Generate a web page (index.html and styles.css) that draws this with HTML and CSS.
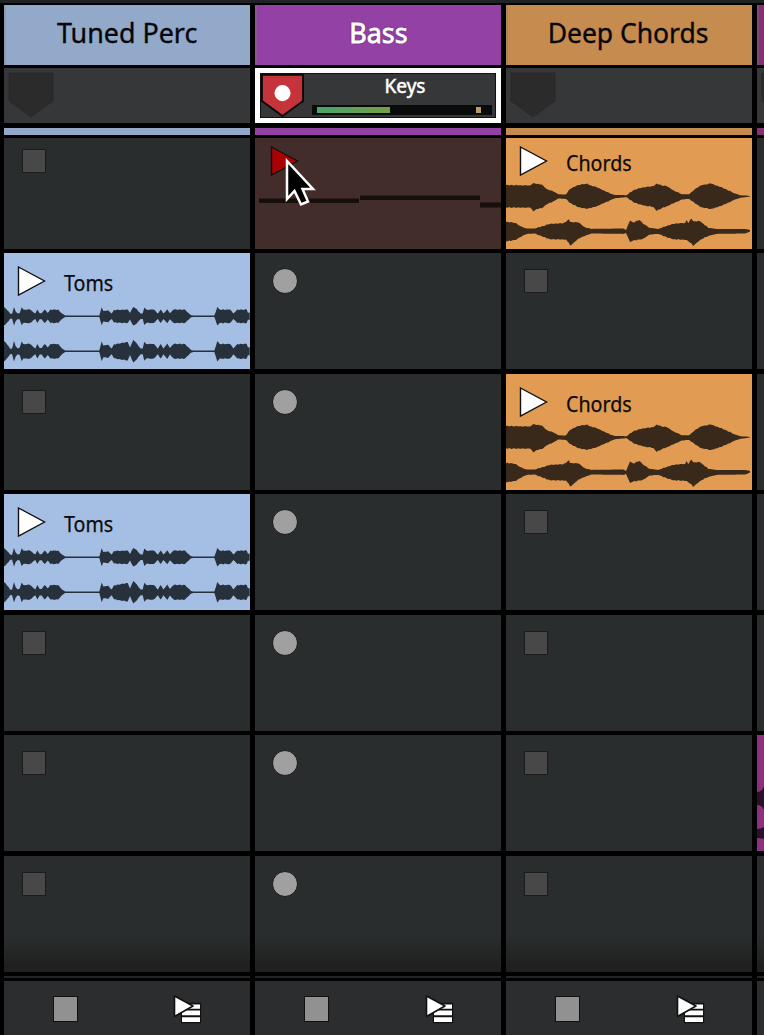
FILE: index.html
```html
<!DOCTYPE html>
<html lang="en">
<head>
<meta charset="utf-8">
<title>Session View</title>
<link rel="stylesheet" href="styles.css">
</head>
<body>
<svg class="defs" aria-hidden="true">
  <symbol id="play" viewBox="0 0 30 32"><path d="M1.500 2 27.500 16 1.500 30Z" stroke="#111" stroke-width="1.4"/></symbol>
  <symbol id="shield" viewBox="0 0 46 46"><path d="M1 1H45V29L23 45 1 29Z"/></symbol>
  <symbol id="scene" viewBox="0 0 32 32"><path d="M11 10H29V28H11Z" fill="#111" stroke="#111" stroke-width="2.400" stroke-linejoin="round"/><path d="M18 10.500H29V14.700H18ZM11 16.500H29V21.300H11ZM11 23.200H29V28H11Z" fill="#fff"/><path d="M3.500 2 22 12 3.500 22.500Z" fill="#fff" stroke="#111" stroke-width="1.600" stroke-linejoin="round"/></symbol>
  <symbol id="toms" viewBox="0 48 246 68"><path id="toms-wave" fill="#27313c"/></symbol>
  <symbol id="chords" viewBox="0 48 246 68"><path id="chords-wave" fill="#38291a"/></symbol>
</svg>
<main class="session">
  <section class="track perc">
    <header class="title"><span>Tuned Perc</span></header>
    <div class="arm"><svg class="shield"><use href="#shield"/></svg></div>
    <div class="strip"></div>
    <div class="slots">
      <div class="slot"><i class="stop"></i></div>
      <div class="slot clip"><div class="head"><svg class="play"><use href="#play"/></svg><span class="name">Toms</span></div><svg class="wave"><use href="#toms"/></svg></div>
      <div class="slot"><i class="stop"></i></div>
      <div class="slot clip"><div class="head"><svg class="play"><use href="#play"/></svg><span class="name">Toms</span></div><svg class="wave"><use href="#toms"/></svg></div>
      <div class="slot"><i class="stop"></i></div>
      <div class="slot"><i class="stop"></i></div>
      <div class="slot last"><i class="stop"></i></div>
    </div>
    <div class="divider"></div>
    <footer class="foot"><i class="stop-all"></i><svg class="scene"><use href="#scene"/></svg></footer>
  </section>
  <section class="track bass">
    <header class="title"><span>Bass</span></header>
    <div class="arm armed">
      <svg class="shield" viewBox="0 0 46 46"><use href="#shield"/><circle cx="23" cy="20.500" r="8.600" fill="#fff" stroke="none"/></svg>
      <div class="input"><span>Keys</span><div class="meter"><i class="level"></i><i class="peak"></i></div></div>
    </div>
    <div class="strip"></div>
    <div class="slots">
      <div class="slot recording">
        <div class="head"><svg class="play"><use href="#play"/></svg></div>
        <svg class="notes" viewBox="0 0 246 18"><path d="M4 4.500H104V9H4ZM105 1.500H225V6H105ZM225 8.500H246V13.500H225Z"/></svg>
        <svg class="cursor" viewBox="0 0 34 52"><path d="M3 3V41L10.500 33 17 46.500 24 43.500 18.500 31H29Z" fill="#000" stroke="#fff" stroke-width="2.500"/></svg>
      </div>
      <div class="slot"><i class="rec"></i></div>
      <div class="slot"><i class="rec"></i></div>
      <div class="slot"><i class="rec"></i></div>
      <div class="slot"><i class="rec"></i></div>
      <div class="slot"><i class="rec"></i></div>
      <div class="slot last"><i class="rec"></i></div>
    </div>
    <div class="divider"></div>
    <footer class="foot"><i class="stop-all"></i><svg class="scene"><use href="#scene"/></svg></footer>
  </section>
  <section class="track deep">
    <header class="title"><span>Deep Chords</span></header>
    <div class="arm"><svg class="shield"><use href="#shield"/></svg></div>
    <div class="strip"></div>
    <div class="slots">
      <div class="slot clip"><div class="head"><svg class="play"><use href="#play"/></svg><span class="name">Chords</span></div><svg class="wave"><use href="#chords"/></svg></div>
      <div class="slot"><i class="stop"></i></div>
      <div class="slot clip"><div class="head"><svg class="play"><use href="#play"/></svg><span class="name">Chords</span></div><svg class="wave"><use href="#chords"/></svg></div>
      <div class="slot"><i class="stop"></i></div>
      <div class="slot"><i class="stop"></i></div>
      <div class="slot"><i class="stop"></i></div>
      <div class="slot last"><i class="stop"></i></div>
    </div>
    <div class="divider"></div>
    <footer class="foot"><i class="stop-all"></i><svg class="scene"><use href="#scene"/></svg></footer>
  </section>
  <section class="track next">
    <header class="title"></header>
    <div class="arm"><svg class="shield"><use href="#shield"/></svg></div>
    <div class="strip"></div>
    <div class="slots">
      <div class="slot"></div><div class="slot"></div><div class="slot"></div><div class="slot"></div><div class="slot"></div>
      <div class="slot clip"><svg class="wave" viewBox="0 48 246 68"><path d="M0 57Q5 57 7 51V75Q5 70 0 70ZM0 94Q4 94 7 92V104Q4 103 0 103Z" fill="#26122a"/></svg></div>
      <div class="slot last"></div>
    </div>
    <div class="divider"></div>
    <footer class="foot"></footer>
  </section>
</main>
<script src="waves.js"></script>
</body>
</html>
```
FILE: styles.css
```css
* { box-sizing: border-box; }
body { margin: 0; width: 764px; height: 1035px; overflow: hidden; background: #000; font-family: "Noto Sans", sans-serif; }
.defs { position: absolute; width: 0; height: 0; }
.session { display: flex; gap: 5px; width: 764px; height: 1035px; padding: 2px 0 0 4px; border-top: 3px solid #202326; overflow: hidden; }
.track { flex: 0 0 246px; display: flex; flex-direction: column; }
.title { height: 60px; display: flex; justify-content: center; background: var(--title); box-shadow: inset 2px 0 0 rgba(130,130,130,.35); color: #05070a; font-size: 28px; line-height: 54px; white-space: nowrap; -webkit-text-stroke: .35px currentColor; }
.title span { transform: scaleX(.96); }
.perc { --title: #92a9ca; --clip: #a5bfe4; }
.bass { --title: #9341a5; --clip: #432d2b; }
.deep { --title: #c68b4e; --clip: #e29b53; }
.next { --title: #853073; --clip: #8c3180; }
.deep .title span { transform: scaleX(.945); }
.deep .title { padding-right: 2px; }
.bass .title { color: #fff; text-shadow: 0 0 2px #33113b; -webkit-text-stroke-width: .8px; }
.arm { margin-top: 3px; height: 55px; padding: 4px; display: flex; background: #363739; }
.shield { width: 46px; height: 46px; fill: #2b2b2c; stroke: #29292a; flex: none; }
.armed { border: 5px solid #fff; padding: 1px 2px 1px 1px; outline: 1px solid #111; outline-offset: -6px; gap: 8px; }
.armed .shield { width: 43px; height: 43px; fill: #c5343b; stroke: #090909; stroke-width: 2; }
.input { width: 180px; display: flex; flex-direction: column; color: #fff; text-align: center; font-size: 19px; line-height: 25px; -webkit-text-stroke: .5px currentColor; }
.input span { display: block; height: 31px; padding-left: 6px; }
.meter { height: 10px; padding: 2px 11px 2px 5px; background: #090a0a; display: flex; justify-content: space-between; }
.level { width: 73px; height: 6px; background: linear-gradient(90deg, #45a56d, #789e44); }
.peak { width: 5px; height: 6px; background: #b99b63; }
.strip { height: 7px; margin: 5px 0 3px; background: var(--title); }
.slots { display: grid; grid-template-rows: 110.5px repeat(6, 116px); row-gap: 4.5px; }
.slot { position: relative; padding: 16px 0 0 18px; background: #2a2d2e; overflow: hidden; }
.slot:first-child { padding-top: 11px; }
.last { background: linear-gradient(#2a2d2e 68%, #202020 95%); }
.stop { display: block; width: 24px; height: 24px; border: 1px solid #1a1b1b; background: #484848; }
.rec { display: block; width: 26px; height: 26px; margin: -1px; border: 1px solid #171919; border-radius: 50%; background: #a0a0a0; }
.clip, .recording { background: var(--clip); display: flex; flex-direction: column; padding: 12px 0 0; }
.slot.clip:first-child, .slot.recording { padding-top: 7px; }
.head { display: flex; height: 32px; padding-left: 13px; }
.play { width: 30px; height: 32px; fill: #fff; flex: none; }
.name { margin: 1px 0 0 17px; font-size: 21.5px; line-height: 33px; color: #0b0b0b; transform: scaleX(.915); transform-origin: left; -webkit-text-stroke: .25px currentColor; }
.wave { width: 246px; height: 68px; margin-top: auto; flex: none; }
.bass .head { padding-left: 15px; }
.recording .play { fill: #aa0203; }
.notes { width: 246px; height: 18px; margin-top: 17px; fill: #170f0c; }
.cursor { position: absolute; left: 29px; top: 20px; width: 34px; height: 52px; }
.divider { height: 2px; margin: 4.5px 0 3px; background: #242526; }
.foot { height: 54px; padding: 15px 47px 0 49px; display: flex; justify-content: space-between; background: #2b2d2e; }
.stop-all { width: 25px; height: 26px; border: 1px solid #101010; background: #919191; }
.scene { width: 32px; height: 32px; margin-top: -2px; }
.bass .foot, .deep .foot { padding-right: 46px; }
```
FILE: waves.js
```javascript
// Envelope samples: [x, height above axis, height below axis], in thirds of a pixel.
const toms = [[0,28],[10,18],[18,8],[24,7],[30,28],[35,14],[41,8],[47,10],[53,27],[58,20],[78,20],[88,12],[94,8],[100,20],[107,9],[113,9],[122,20],[131,10],[139,20],[163,20],[174,8],[184,2],[286,2],[293,27],[298,16],[313,18],[323,8],[330,19],[371,20],[378,10],[388,28],[398,22],[410,8],[416,8],[421,26],[427,20],[449,20],[462,8],[470,20],[478,8],[490,21],[498,9],[509,20],[543,20],[560,4],[568,2],[631,2],[640,28],[647,20],[678,20],[688,8],[700,20],[728,20],[732,10],[737,12]];
const tomsRight = toms.map(([x, h]) => [x, x === 371 ? 28 : x === 388 ? 34 : h > 2 ? h * 1.1 : h]);
const chords = [[0,34,34],[62,32,34],[72,32,34],[82,40,46],[92,37,38],[107,35,36],[122,22,25],[142,14,15],[157,6,7],[179,5,8],[192,22,20],[217,34,33],[244,38,38],[252,33,36],[272,27,30],[292,18,22],[312,8,12],[327,4,6],[362,3,3],[382,18,18],[412,27,28],[442,30,32],[452,38,44],[467,32,36],[482,30,30],[502,18,22],[527,6,10],[550,6,8],[567,22,22],[587,33,33],[614,38,38],[632,32,34],[662,20,22],[687,8,10],[702,3,5],[732,1,1]];
const chordsRight = [[0,28,30],[30,25,26],[42,16,18],[62,8,8],[87,8,7],[112,16,17],[132,22,24],[172,24,25],[180,28,25],[189,36,35],[192,28,43],[198,28,40],[217,26,22],[237,12,14],[257,7,7],[352,8,8],[360,4,5],[367,20,20],[372,32,32],[382,26,28],[400,34,25],[412,22,22],[432,10,10],[457,7,8],[482,16,18],[502,22,24],[537,25,26],[542,34,26],[547,24,30],[556,38,36],[562,30,44],[582,30,26],[607,10,14],[632,7,8],[717,7,7],[732,4,1]];

function channel(points, axis) {
  const dense = [];
  points.forEach((p, i) => {
    const q = points[i + 1];
    const n = q ? Math.max(1, Math.round((q[0] - p[0]) / 5)) : 1;
    for (let k = 0; k < n; k++) {
      const t = q ? k / n : 0;
      const mix = c => q ? p[c] * (1 - t) + q[c] * t : p[c];
      const up = mix(1), down = p.length > 2 ? mix(2) : up;
      const ripple = up > 10 && k ? Math.sin(dense.length * 2.4) * 1.2 : 0;
      dense.push([mix(0) / 3, (up + ripple) / 3, (down + ripple) / 3]);
    }
  });
  const f = (x, y) => x.toFixed(1) + " " + y.toFixed(1);
  return "M" + dense.map(p => f(p[0], axis - p[1])).join("L") + "L" +
    dense.reverse().map(p => f(p[0], axis + p[2])).join("L") + "Z";
}

document.getElementById("toms-wave").setAttribute("d", channel(toms, 63.3) + channel(tomsRight, 98.3));
document.getElementById("chords-wave").setAttribute("d", channel(chords, 63.2) + channel(chordsRight, 98.2));
```
